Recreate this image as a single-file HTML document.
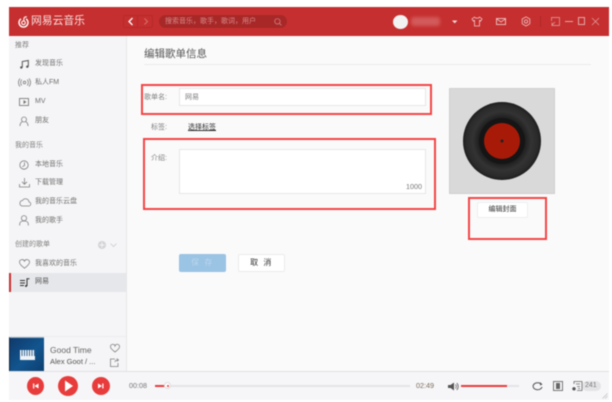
<!DOCTYPE html>
<html lang="zh">
<head>
<meta charset="utf-8">
<title>编辑歌单信息</title>
<style>
html,body{margin:0;padding:0;background:#fff;width:612px;height:402px;overflow:hidden}
body{font-family:"Liberation Sans","Noto Sans CJK SC",sans-serif;position:relative}
#wrap{position:absolute;left:0;top:0;width:612px;height:402px;filter:blur(.45px)}
.a{position:absolute;white-space:nowrap}
.box{position:absolute;box-sizing:border-box;border:2px solid #f44444}
.nav{position:absolute;left:35px;font-size:7px;line-height:10px;color:#707070;white-space:nowrap}
.sec{position:absolute;left:15px;font-size:7px;line-height:10px;color:#808080;white-space:nowrap}
.lbl{position:absolute;font-size:7px;line-height:10px;color:#808080;white-space:nowrap}
svg{position:absolute;overflow:visible}
.ic{fill:none;stroke:#808080;stroke-width:.8}
.w{fill:none;stroke:#efc6c6;stroke-width:.8}
</style>
</head>
<body>
<div id="wrap">
<!-- app -->
<div class="a" style="left:9px;top:7px;width:600px;height:393px;background:#fafafa"></div>
<!-- header -->
<div class="a" style="left:9px;top:7px;width:600px;height:29px;background:#c62f2f"></div>
<svg style="left:18px;top:16px" width="11" height="12" viewBox="0 0 11 12"><path d="M3 2.800A4.500 4.500 0 1 0 8 2.800" fill="none" stroke="#fff" stroke-width="1.400"/><circle cx="5.500" cy="6.800" r="1.800" fill="none" stroke="#fff" stroke-width="1.100"/><path d="M6 5C5.500 2.500 6 .6 8.800 .8" fill="none" stroke="#fff" stroke-width="1.100"/></svg>
<div class="a" style="left:31px;top:14px;font-size:10.800px;line-height:15px;color:#f8dfdf">网易云音乐</div>
<div class="a" style="left:123px;top:15px;width:15px;height:13px;box-sizing:border-box;border:1px solid #b52a2a;border-radius:2px 0 0 2px"></div>
<div class="a" style="left:138px;top:15px;width:15px;height:13px;box-sizing:border-box;border:1px solid #b52a2a;border-left:0;border-radius:0 2px 2px 0"></div>
<svg style="left:123px;top:15px" width="30" height="13"><path d="M9.500 3L6 6.500 9.500 10" fill="none" stroke="#fff" stroke-width="1.300"/><path d="M21.500 3.500L24.500 6.500 21.500 9.500" fill="none" stroke="#d8706f" stroke-width="1"/></svg>
<div class="a" style="left:159px;top:15px;width:128px;height:13px;border-radius:7px;background:#a82828"></div>
<div class="a" style="left:165px;top:16px;font-size:7px;line-height:11px;color:#d98a8a">搜索音乐，歌手，歌词，用户</div>
<svg style="left:274px;top:18px" width="8" height="8"><circle cx="3.400" cy="3.400" r="2.700" fill="none" stroke="#d98a8a" stroke-width=".7"/><path d="M5.400 5.400l2 2" stroke="#d98a8a" stroke-width=".7"/></svg>
<div class="a" style="left:393px;top:15px;width:15px;height:14px;border-radius:50%;background:#f2f2f2"></div>
<div class="a" style="left:411px;top:17px;width:29px;height:9px;border-radius:3px;background:#d25a5a;filter:blur(1.500px)"></div>
<svg style="left:452px;top:20px" width="6" height="4"><path d="M0 .5h5.400L2.700 3.400z" fill="#f3dcdc"/></svg>
<svg style="left:471px;top:16px" width="11" height="11"><path d="M3.500 1L1 3l1.200 2 1.300-.6V10h5V4.400l1.300.6L11 3 8.500 1C7.800 2.600 4.200 2.600 3.500 1z" class="w"/></svg>
<div class="a" style="left:496px;top:18px;width:10px;height:7px;box-sizing:border-box;border:1px solid #e9b5b5"></div>
<svg style="left:496px;top:18px" width="10" height="7"><path d="M.5.800L5 4 9.500.800" class="w"/></svg>
<svg style="left:521px;top:16px" width="10" height="11"><path d="M5 .8L8.800 3V7.800L5 10 1.200 7.800V3z" class="w" stroke-linejoin="round"/><circle cx="5" cy="5.500" r="1.600" class="w"/></svg>
<div class="a" style="left:540px;top:16px;width:1px;height:11px;background:#b02828"></div>
<svg style="left:551px;top:17px" width="9" height="9"><path d="M.5 4V.5h8v8H4M.5 8.500L4 5M1 5.500V8.500H4" fill="none" stroke="#e3a5a5" stroke-width=".7"/></svg>
<div class="a" style="left:565px;top:21px;width:8px;height:1px;background:#e3a5a5"></div>
<div class="a" style="left:578px;top:17px;width:7px;height:8px;box-sizing:border-box;border:1px solid #e3a5a5"></div>
<svg style="left:592px;top:18px" width="7" height="7"><path d="M0 0l7 7M7 0L0 7" stroke="#e3a5a5" stroke-width=".7"/></svg>

<!-- sidebar -->
<div class="a" style="left:9px;top:36px;width:117px;height:335px;background:#f5f5f7;border-right:1px solid #e6e6e8"></div>
<div class="sec" style="top:41px">推荐</div>
<svg style="left:20px;top:60px" width="9" height="9"><path d="M2.300 7.500V1.500l6-1v6" fill="none" stroke="#555" stroke-width="1"/><circle cx="1.300" cy="7.500" r="1.200" fill="#555"/><circle cx="7.300" cy="6.700" r="1.200" fill="#555"/></svg>
<div class="nav" style="top:59px">发现音乐</div>
<svg style="left:19px;top:78px" width="11" height="9"><circle cx="5.500" cy="4.500" r="1.300" class="ic"/><path d="M2.800 1.500a4.500 4.500 0 0 0 0 6M8.200 1.500a4.500 4.500 0 0 1 0 6M1 .5a6 6 0 0 0 0 8M10 .5a6 6 0 0 1 0 8" class="ic"/></svg>
<div class="nav" style="top:78px">私人FM</div>
<div class="a" style="left:19px;top:98px;width:10px;height:8px;box-sizing:border-box;border:1px solid #888"></div>
<svg style="left:22.500px;top:100px" width="4" height="4"><path d="M.5 0L3.500 2 .5 4z" fill="#777"/></svg>
<div class="nav" style="top:97px">MV</div>
<svg style="left:19px;top:116px" width="11" height="11"><circle cx="5" cy="3.500" r="2.500" class="ic"/><path d="M1 10c0-3 1.500-4 2.500-4.500M9 10c0-3-1.500-4-2.500-4.500" class="ic"/></svg>
<div class="nav" style="top:116px">朋友</div>

<div class="sec" style="top:141px">我的音乐</div>
<svg style="left:19px;top:160px" width="10" height="10"><circle cx="5" cy="5" r="4.200" class="ic"/><path d="M5.500 2.200V5.500L3.300 6.800" class="ic"/></svg>
<div class="nav" style="top:160px">本地音乐</div>
<svg style="left:19px;top:178px" width="11" height="10"><path d="M5.500 0v6M3 3.800l2.500 2.500L8 3.800M.5 6v3h10V6" class="ic"/></svg>
<div class="nav" style="top:178px">下载管理</div>
<svg style="left:19px;top:197px" width="12" height="10"><path d="M3 9h6.500a2 2 0 0 0 .5-4A3.500 3.500 0 0 0 3.500 3.500 2.800 2.800 0 0 0 3 9z" class="ic"/></svg>
<div class="nav" style="top:197px">我的音乐云盘</div>
<svg style="left:19px;top:215px" width="10" height="11"><circle cx="5" cy="3.200" r="2.600" class="ic"/><path d="M.7 10.500V9C.7 7 2.700 6 5 6s4.300 1 4.300 3v1.500" class="ic"/></svg>
<div class="nav" style="top:216px">我的歌手</div>

<div class="sec" style="top:240px">创建的歌单</div>
<div class="a" style="left:98px;top:241px;width:8px;height:8px;border-radius:50%;background:#d4d4d6"></div>
<svg style="left:98px;top:241px" width="8" height="8"><path d="M4 1.500v5M1.500 4h5" stroke="#f5f5f7" stroke-width="1"/></svg>
<svg style="left:110px;top:243px" width="7" height="5"><path d="M.5.500L3.500 3.500 6.500.500" fill="none" stroke="#ccc" stroke-width=".8"/></svg>
<svg style="left:19px;top:259px" width="11" height="10"><path d="M5.500 9.200C2 6.500.5 5 .5 3.200A2.600 2.600 0 0 1 5.500 2.200 2.600 2.600 0 0 1 10.500 3.200C10.500 5 9 6.500 5.500 9.200z" class="ic"/></svg>
<div class="nav" style="top:259px">我喜欢的音乐</div>
<div class="a" style="left:9px;top:273px;width:117px;height:19px;background:#e6e7ea"></div>
<div class="a" style="left:9px;top:273px;width:2px;height:19px;background:#c62f2f"></div>
<svg style="left:20px;top:278px" width="10" height="9"><path d="M0 2.500h5M0 5h5M0 7.500h4" stroke="#333" stroke-width=".9"/><path d="M7 8V.8h2.500" fill="none" stroke="#333" stroke-width="1"/><circle cx="6" cy="8" r="1" fill="#333"/></svg>
<div class="nav" style="top:277px;color:#555">网易</div>

<!-- now playing -->
<div class="a" style="left:9px;top:336px;width:117px;height:1px;background:#ececee"></div>
<div class="a" style="left:9px;top:337px;width:35px;height:34px;background:linear-gradient(135deg,#0f3a6b 0%,#12558f 55%,#0c3f70 100%);border-top:1px solid #8fa9c0;border-left:1px solid #16263a;box-sizing:border-box"></div>
<div class="a" style="left:20px;top:350px;width:15px;height:10px;background:#eef3f8"></div>
<div class="a" style="left:20px;top:350px;width:15px;height:6px;background:repeating-linear-gradient(90deg,#eef3f8 0 1.500px,#3a6690 1.500px 2.500px)"></div>
<div class="a" style="left:50px;top:345px;font-size:8.500px;line-height:11px;color:#666">Good Time</div>
<div class="a" style="left:50px;top:356px;font-size:7.500px;line-height:11px;color:#555">Alex Goot / ...</div>
<svg style="left:110px;top:344px" width="10" height="9"><path d="M5 8C2 5.800.5 4.500.5 2.900A2.300 2.300 0 0 1 5 2 2.300 2.300 0 0 1 9.500 2.900C9.500 4.500 8 5.800 5 8z" class="ic"/></svg>
<svg style="left:110px;top:358px" width="9" height="9"><path d="M5 1H.5v7.500h7.500V5" class="ic"/><path d="M5 4c0-1.500 1-2 3-2M6.800.5L8.500 2 6.800 3.500" class="ic"/></svg>

<!-- main -->
<div class="a" style="left:144px;top:46px;font-size:10.500px;line-height:16px;color:#555">编辑歌单信息</div>
<div class="a" style="left:144px;top:64px;width:447px;height:1px;background:#ebebeb"></div>

<div class="lbl" style="left:144px;top:93px">歌单名:</div>
<div class="a" style="left:179px;top:88px;width:247px;height:18px;box-sizing:border-box;background:#fff;border:1px solid #e6e6e6"></div>
<div class="lbl" style="left:185px;top:93px">网易</div>
<div class="box" style="left:141px;top:84px;width:291px;height:31px"></div>

<div class="lbl" style="left:151px;top:123px">标签:</div>
<div class="a" style="left:188px;top:123px;font-size:7px;line-height:10px;color:#333;text-decoration:underline">选择标签</div>

<div class="lbl" style="left:151px;top:154px">介绍:</div>
<div class="a" style="left:179px;top:149px;width:247px;height:45px;box-sizing:border-box;background:#fff;border:1px solid #e6e6e6"></div>
<div class="a" style="left:406px;top:182px;font-size:7.200px;line-height:10px;color:#777">1000</div>
<div class="box" style="left:143px;top:138px;width:293px;height:72px"></div>

<div class="a" style="left:179px;top:254px;width:47px;height:18px;border-radius:2px;background:#9ac3e4;color:#bcd7ec;font-size:8px;letter-spacing:1.500px;line-height:18px;text-align:center">保 存</div>
<div class="a" style="left:238px;top:254px;width:47px;height:18px;box-sizing:border-box;border-radius:2px;background:#fff;border:1px solid #ececec;color:#333;font-size:8px;letter-spacing:1.500px;line-height:16px;text-align:center">取 消</div>

<!-- cover -->
<div class="a" style="left:449px;top:88px;width:106px;height:106px;box-sizing:border-box;background:#d9d9d9;border:1px solid #d0d0d0"></div>
<svg style="left:449px;top:88px" width="106" height="106">
<defs><radialGradient id="d" cx="50%" cy="50%" r="50%"><stop offset="55%" stop-color="#1a1a1a"/><stop offset="75%" stop-color="#333"/><stop offset="92%" stop-color="#2a2a2a"/><stop offset="100%" stop-color="#1c1c1c"/></radialGradient></defs>
<circle cx="53" cy="53" r="39" fill="url(#d)"/><circle cx="53" cy="53" r="23" fill="#151515"/><circle cx="53" cy="53" r="18" fill="#a81a08"/><circle cx="53" cy="53" r="1.500" fill="#222"/></svg>
<div class="a" style="left:477px;top:202px;width:51px;height:16px;box-sizing:border-box;background:#fff;border:1px solid #eee;border-radius:2px;font-size:7px;line-height:14px;text-align:center;color:#333">编辑封面</div>
<div class="box" style="left:468px;top:197px;width:79px;height:43px"></div>

<!-- player -->
<div class="a" style="left:9px;top:371px;width:600px;height:29px;box-sizing:border-box;background:#f6f6f8;border-top:1px solid #e1e1e2"></div>
<div class="a" style="left:27px;top:377px;width:17px;height:18px;border-radius:50%;background:#e83c3c"></div>
<svg style="left:27px;top:377px" width="17" height="18"><path d="M6 6.500h1.200v5H6zM11.500 6.500v5L7.500 9z" fill="#fff"/></svg>
<div class="a" style="left:58px;top:376px;width:20px;height:20px;border-radius:50%;background:#e83c3c"></div>
<svg style="left:58px;top:376px" width="20" height="20"><path d="M7 4.500L15 10l-8 5.500z" fill="#fff"/></svg>
<div class="a" style="left:92px;top:377px;width:18px;height:18px;border-radius:50%;background:#e83c3c"></div>
<svg style="left:92px;top:377px" width="18" height="18"><path d="M6 6.500v5L10 9zM10.300 6.500h1.200v5h-1.200z" fill="#fff"/></svg>
<div class="a" style="left:129px;top:381px;font-size:7.200px;line-height:10px;color:#777">00:08</div>
<div class="a" style="left:155px;top:385px;width:255px;height:2px;background:#e4e4e6"></div>
<div class="a" style="left:155px;top:385px;width:11px;height:2px;background:#e83c3c"></div>
<div class="a" style="left:164px;top:382px;width:7px;height:7px;box-sizing:border-box;border-radius:50%;background:#fff;border:1px solid #ddd"></div>
<div class="a" style="left:167px;top:385px;width:2px;height:2px;border-radius:50%;background:#e83c3c"></div>
<div class="a" style="left:416px;top:381px;font-size:7.200px;line-height:10px;color:#7a6a5a">02:49</div>
<svg style="left:448px;top:382px" width="10" height="9"><path d="M0 3h2.500L6 .5v8L2.500 6H0z" fill="#555"/><path d="M7.500 2.500a3 3 0 0 1 0 4M8.800 1a5 5 0 0 1 0 7" fill="none" stroke="#555" stroke-width=".8"/></svg>
<div class="a" style="left:461px;top:385px;width:58px;height:2px;background:#e4e4e6"></div>
<div class="a" style="left:461px;top:385px;width:46px;height:2px;background:#e83c3c"></div>
<svg style="left:532px;top:382px" width="11" height="9"><path d="M9.500 2.500A4.500 3.500 0 1 0 10 5" fill="none" stroke="#555" stroke-width="1" transform="translate(0 0)"/><path d="M8 0l2.500 2.500L8 3.500z" fill="#555"/></svg>
<div class="a" style="left:553px;top:381px;width:10px;height:10px;box-sizing:border-box;border:1px solid #777"></div>
<div class="a" style="left:556px;top:383px;width:4px;height:6px;background:#666"></div>
<div class="a" style="left:582px;top:381px;width:19px;height:10px;border-radius:5px;background:#e4e4e6"></div>
<svg style="left:572px;top:381px" width="11" height="10"><path d="M2 3V.5h8v9H5M4 3h4M5 5.500h3M6 7.500h2" fill="none" stroke="#666" stroke-width=".8"/><circle cx="2" cy="7.800" r="1.700" fill="#555"/></svg>
<div class="a" style="left:585px;top:381px;font-size:7px;line-height:10px;color:#777">241</div>
<svg style="left:602px;top:393px" width="6" height="6"><path d="M5.500.5L.5 5.500M5.500 3L3 5.500" stroke="#bbb" stroke-width=".7"/></svg>
</div>
</body>
</html>
